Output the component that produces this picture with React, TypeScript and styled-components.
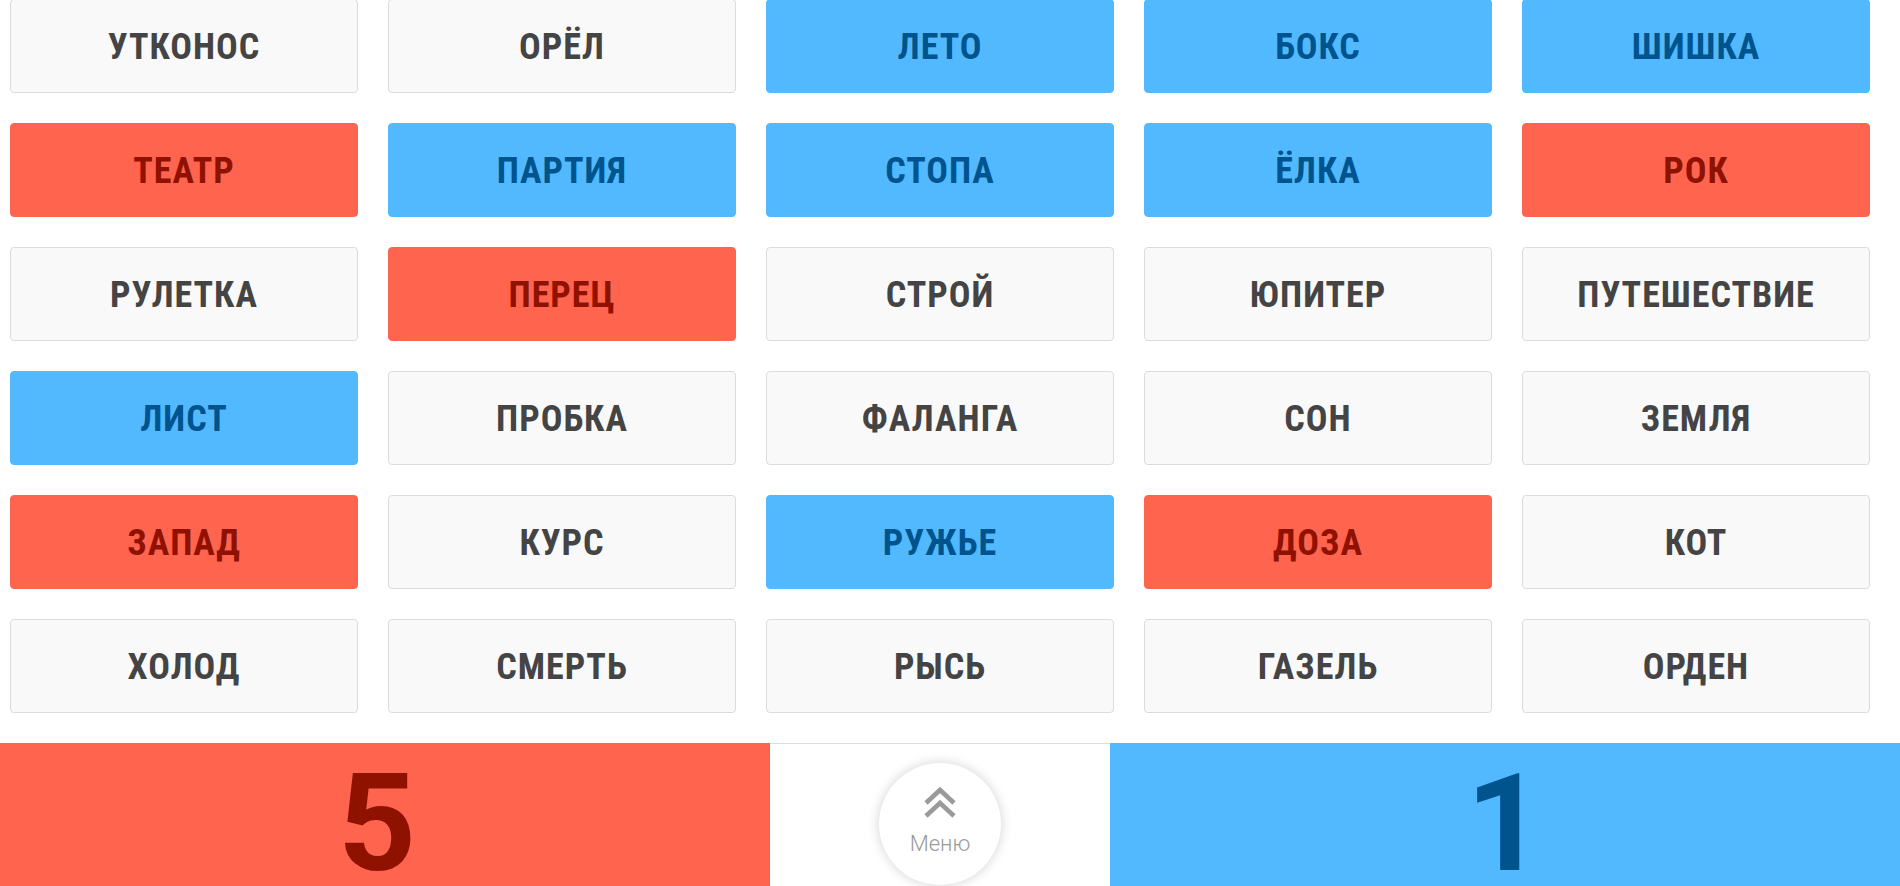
import React from "react";
import styled, { createGlobalStyle } from "styled-components";

const Global = createGlobalStyle`
  html, body { margin: 0; padding: 0; height: 100%; overflow: hidden; background: #fff; }
  body { font-family: Roboto, "Liberation Sans", sans-serif; }
  * { box-sizing: border-box; }
`;

type Tone = "n" | "r" | "b";

const palette = {
  n: { bg: "#f9f9f9", border: "#dcdcdc", fg: "#444444" },
  r: { bg: "#ff644f", border: "#ff644f", fg: "#8f1100" },
  b: { bg: "#52b9ff", border: "#52b9ff", fg: "#00548e" },
};

const Page = styled.div`
  width: 1900px;
  height: 886px;
  display: flex;
  flex-direction: column;
`;

const Board = styled.div`
  display: grid;
  grid-template-columns: repeat(5, 348px);
  grid-auto-rows: 94px;
  column-gap: 30px;
  row-gap: 30px;
  padding-left: 10px;
  margin-top: -1px;
`;

const Card = styled.div<{ $tone: Tone }>`
  display: flex;
  align-items: center;
  justify-content: center;
  padding-top: 2px;
  border-radius: 4px;
  background: ${(p) => palette[p.$tone].bg};
  border: 1px solid ${(p) => palette[p.$tone].border};
  color: ${(p) => palette[p.$tone].fg};
  font-family: Roboto, "Liberation Sans", sans-serif;
  font-weight: 700;
  font-size: 36px;
  font-stretch: 85%;
  letter-spacing: 1px;
  text-transform: uppercase;
`;

const Footer = styled.div`
  margin-top: 30px;
  flex: 1;
  display: grid;
  grid-template-columns: 770px 340px 790px;
`;

const Score = styled.div<{ $tone: "r" | "b"; $shift: number }>`
  background: ${(p) => palette[p.$tone].bg};
  color: ${(p) => palette[p.$tone].fg};
  display: flex;
  align-items: center;
  justify-content: center;
  font-family: Roboto, "Liberation Sans", sans-serif;
  font-weight: 700;
  font-size: 136px;
  line-height: 100px;
  padding-top: 18px;
  padding-right: ${(p) => p.$shift}px;
`;

const Middle = styled.div`
  border-top: 1px solid #dddddd;
  display: flex;
  justify-content: center;
  padding-top: 19px;
`;

const MenuButton = styled.div`
  width: 122px;
  height: 122px;
  border-radius: 50%;
  background: #fff;
  box-shadow: 0 0 12px rgba(0, 0, 0, 0.18);
  display: flex;
  flex-direction: column;
  align-items: center;
  padding-top: 23px;
  color: #999;
`;

const MenuLabel = styled.span`
  font-family: Roboto, "Liberation Sans", sans-serif;
  font-weight: 300;
  font-size: 22px;
  line-height: 1;
  margin-top: 14px;
  color: #9a9a9a;
`;

const ChevronsUp = () => (
  <svg width="34" height="33" viewBox="0 0 34 33" fill="none">
    <polyline points="3,17 17,4 31,17" stroke="#9a9a9a" strokeWidth="4.6" strokeLinecap="butt" strokeLinejoin="miter" />
    <polyline points="3,30 17,17 31,30" stroke="#9a9a9a" strokeWidth="4.6" strokeLinecap="butt" strokeLinejoin="miter" />
  </svg>
);

const words: [string, Tone][] = [
  ["Утконос", "n"], ["Орёл", "n"], ["Лето", "b"], ["Бокс", "b"], ["Шишка", "b"],
  ["Театр", "r"], ["Партия", "b"], ["Стопа", "b"], ["Ёлка", "b"], ["Рок", "r"],
  ["Рулетка", "n"], ["Перец", "r"], ["Строй", "n"], ["Юпитер", "n"], ["Путешествие", "n"],
  ["Лист", "b"], ["Пробка", "n"], ["Фаланга", "n"], ["Сон", "n"], ["Земля", "n"],
  ["Запад", "r"], ["Курс", "n"], ["Ружье", "b"], ["Доза", "r"], ["Кот", "n"],
  ["Холод", "n"], ["Смерть", "n"], ["Рысь", "n"], ["Газель", "n"], ["Орден", "n"],
];

export default function App() {
  return (
    <>
      <Global />
      <Page>
        <Board>
          {words.map(([w, t]) => (
            <Card key={w} $tone={t}>{w}</Card>
          ))}
        </Board>
        <Footer>
          <Score $tone="r" $shift={16}>5</Score>
          <Middle>
            <MenuButton>
              <ChevronsUp />
              <MenuLabel>Меню</MenuLabel>
            </MenuButton>
          </Middle>
          <Score $tone="b" $shift={0}>1</Score>
        </Footer>
      </Page>
    </>
  );
}
